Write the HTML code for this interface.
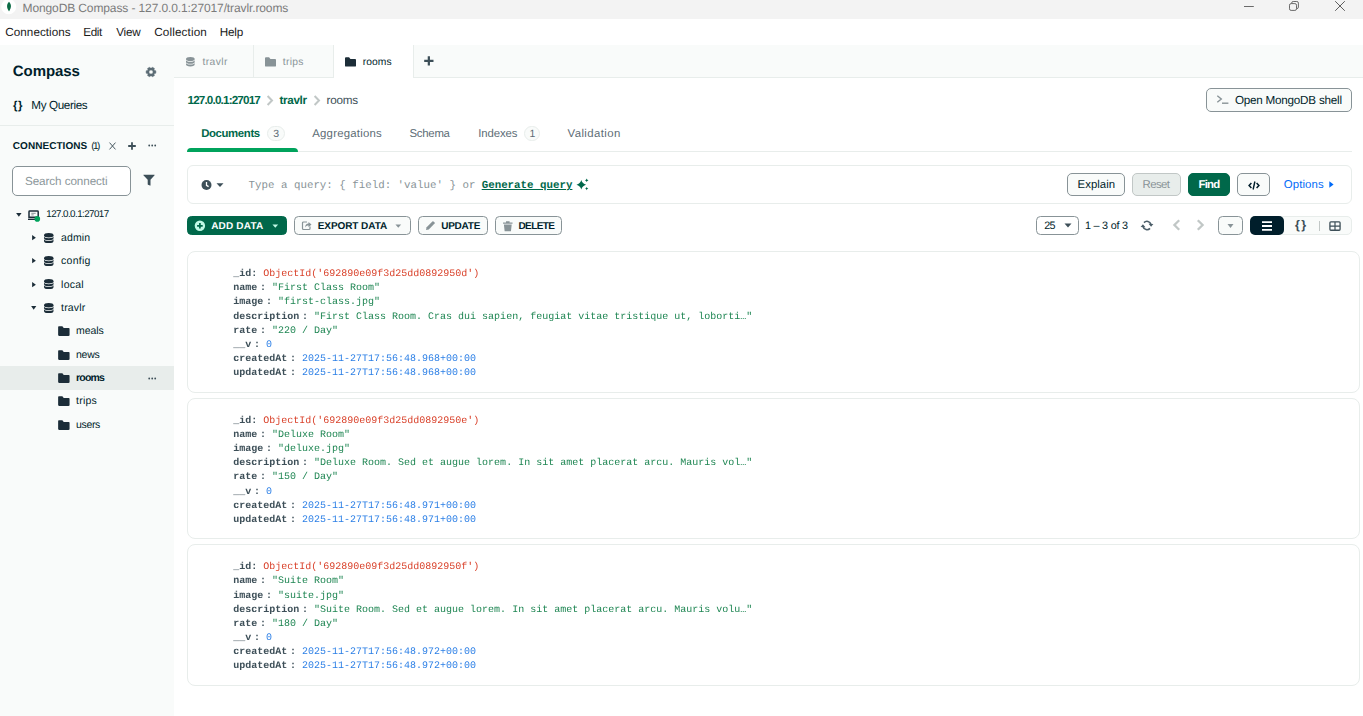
<!DOCTYPE html>
<html>
<head>
<meta charset="utf-8">
<title>MongoDB Compass - 127.0.0.1:27017/travlr.rooms</title>
<style>
*{box-sizing:border-box;margin:0;padding:0}
html,body{width:1363px;height:716px;overflow:hidden;background:#fff;font-family:"Liberation Sans",sans-serif;color:#001e2b}
.a{position:absolute}
.x{position:absolute;white-space:pre;height:16px;text-rendering:geometricPrecision}
svg{position:absolute;overflow:visible}
.bx{position:absolute;border:1px solid #889397;border-radius:4.5px;background:#f9fbfa}
.card{position:absolute;left:187px;width:1173px;height:141px;border:1px solid #e8edeb;border-radius:8px;background:#fff}
.badge{position:absolute;top:126px;height:15px;border:1px solid #e8edeb;border-radius:8px;background:#f9fbfa}
</style>
</head>
<body>
<!-- title bar -->
<div class="a" style="left:0;top:0;width:1363px;height:19px;background:#f3f3f3"></div>
<svg style="left:0;top:0" width="18" height="16" viewBox="0 0 18 16"><circle cx="8.7" cy="6.7" r="7.5" fill="#fff"/><path d="M9 1.8C6.6 4.2 6.3 7.6 8.9 11.2h.2C11.700 7.600 11.400 4.200 9 1.800Z" fill="#0b6b45"/></svg>
<svg style="left:1240px;top:0" width="123" height="19" viewBox="0 0 123 19">
  <path d="M4 6.500H13.800" stroke="#6a6a6a" stroke-width="1" fill="none"/>
  <rect x="49.500" y="3.600" width="7" height="6.800" rx="1.600" fill="none" stroke="#6a6a6a"/><path d="M51.700 3.400V3a1.500 1.500 0 0 1 1.500-1.500h3.600a1.600 1.600 0 0 1 1.600 1.600v4a1.500 1.500 0 0 1-1.500 1.500h-.300" fill="none" stroke="#6a6a6a"/>
  <path d="M95.200 1.200l9.600 9.600M104.800 1.200l-9.600 9.600" stroke="#5e5e5e" stroke-width="1" fill="none"/>
</svg>
<!-- menubar -->
<div class="a" style="left:0;top:19px;width:1363px;height:26px;background:#fff"></div>
<!-- sidebar + tabbar bg -->
<div class="a" style="left:0;top:45px;width:174px;height:671px;background:#f9fbfa"></div>
<div class="a" style="left:174px;top:45px;width:1189px;height:33px;background:#f9fbfa;border-bottom:1px solid #e8edeb"></div>
<!-- workspace tabs -->
<div class="a" style="left:253px;top:45px;width:1px;height:33px;background:#e8edeb"></div>
<div class="a" style="left:333px;top:45px;width:81px;height:33px;background:#fff;border-left:1px solid #e8edeb;border-right:1px solid #e8edeb"></div>
<svg style="left:185.700px;top:57.400px" width="8.700" height="9.500" viewBox="0 0 10 9.700" preserveAspectRatio="none" fill="#889397"><ellipse cx="5" cy="2.100" rx="5" ry="2.100"/><path d="M0 2.800A5 2.100 0 0 0 10 2.800V4.800A5 2.100 0 0 1 0 4.800Z"/><path d="M0 5.500A5 2.100 0 0 0 10 5.500V7.500A5 2.100 0 0 1 0 7.500Z"/></svg>
<svg style="left:265px;top:57px" width="11" height="10" viewBox="0 0 11 10"><path d="M0 1.200C0 .700.400.300.900.300h3.200l1.300 1.600h4.700c.500 0 .900.400.900.900v5.900c0 .500-.400.900-.900.900H.900C.400 9.600 0 9.200 0 8.700Z" fill="#889397"/></svg>
<svg style="left:345px;top:57px" width="11" height="10" viewBox="0 0 11 10"><path d="M0 1.200C0 .700.400.300.900.300h3.200l1.300 1.600h4.700c.500 0 .900.400.900.900v5.900c0 .500-.400.900-.900.900H.900C.400 9.600 0 9.200 0 8.700Z" fill="#1c2d38"/></svg>
<svg style="left:424px;top:56.300px" width="9.700" height="9.700" viewBox="0 0 10 10"><path d="M5 .200v9.600M.200 5h9.600" stroke="#3d4f58" stroke-width="2.300"/></svg>
<!-- sidebar items -->
<svg style="left:144.900px;top:66px" width="12" height="12" viewBox="0 0 12 12"><path fill="#5c6c75" fill-rule="evenodd" stroke="#5c6c75" stroke-width="0.500" stroke-linejoin="round" d="M9.76 4.63L10.85 4.79L10.85 7.21L9.76 7.37L9.06 8.57L9.47 9.60L7.38 10.81L6.69 9.94L5.31 9.94L4.62 10.81L2.53 9.60L2.94 8.57L2.24 7.37L1.15 7.21L1.15 4.79L2.24 4.63L2.94 3.43L2.53 2.40L4.62 1.19L5.31 2.06L6.69 2.06L7.38 1.19L9.47 2.40L9.06 3.43ZM8.10 6.00a2.1 2.1 0 1 0 -4.2 0a2.1 2.1 0 1 0 4.2 0Z"/></svg>
<div class="a" style="left:0;top:125px;width:174px;height:1px;background:#e8edeb"></div>
<svg style="left:109.400px;top:142px" width="7" height="8" viewBox="0 0 8 8" preserveAspectRatio="none"><path d="M.600.600l6.800 6.800M7.400.600l-6.800 6.800" stroke="#3d4f58" stroke-width="1" fill="none"/></svg>
<svg style="left:128px;top:142px" width="8" height="8" viewBox="0 0 8 8"><path d="M4 .200v7.600M.200 4h7.600" stroke="#3d4f58" stroke-width="1.800"/></svg>
<svg style="left:148px;top:144px" width="9" height="3" viewBox="0 0 9 3"><circle cx="1.200" cy="1.500" r=".900" fill="#3d4f58"/><circle cx="4.200" cy="1.500" r=".900" fill="#3d4f58"/><circle cx="7.200" cy="1.500" r=".900" fill="#3d4f58"/></svg>
<div class="a" style="left:12px;top:166px;width:119px;height:30px;border:1px solid #889397;border-radius:5px;background:#fff"></div>
<svg style="left:143px;top:174px" width="12" height="13" viewBox="0 0 12 13"><path d="M.600.800h10.800c.300 0 .400.300.200.500L7.500 5.800v5.400c0 .300-.300.500-.600.400l-1.900-.900c-.200-.1-.300-.300-.300-.500V5.800L.400 1.300C.200 1.100.300.800.600.800Z" fill="#3d4f58"/></svg>
<!-- tree -->
<div class="a" style="left:0;top:366px;width:174px;height:24px;background:#e8edeb"></div>
<svg style="left:15.900px;top:213.100px" width="5.700" height="3.800" viewBox="0 0 5.700 3.800"><path d="M.100.100h5.500L2.850 3.700z" fill="#1c2d38"/></svg>
<svg style="left:28.300px;top:209.700px" width="12" height="12" viewBox="0 0 12 12"><path d="M1.700 1.100h7.800c.400 0 .700.300.700.700v5.400H1V1.800c0-.4.300-.7.700-.7Z" fill="none" stroke="#1c2d38" stroke-width="1.500"/><path d="M3.300 3.300h4.400M3.300 4.900h2.400" stroke="#889397" stroke-width="1"/><path d="M0 8.600h7v1.400H0z" fill="#1c2d38"/><circle cx="9.300" cy="8.900" r="2.800" fill="#00a35c"/></svg>
<svg style="left:148px;top:376.500px" width="9" height="3" viewBox="0 0 9 3"><circle cx="1.200" cy="1.500" r=".900" fill="#3d4f58"/><circle cx="4.200" cy="1.500" r=".900" fill="#3d4f58"/><circle cx="7.200" cy="1.500" r=".900" fill="#3d4f58"/></svg>
<svg style="left:43.9px;top:232.6px" width="9.500" height="10.200" viewBox="0 0 10 9.700" preserveAspectRatio="none" fill="#1c2d38"><ellipse cx="5" cy="2.100" rx="5" ry="2.100"/><path d="M0 2.800A5 2.100 0 0 0 10 2.800V4.800A5 2.100 0 0 1 0 4.800Z"/><path d="M0 5.500A5 2.100 0 0 0 10 5.500V7.500A5 2.100 0 0 1 0 7.500Z"/></svg>
<svg style="left:32.1px;top:235.0px" width="4" height="5.400" viewBox="0 0 4 5.400"><path d="M.100.100L3.900 2.700.100 5.300z" fill="#1c2d38"/></svg>
<svg style="left:43.9px;top:256.0px" width="9.500" height="10.200" viewBox="0 0 10 9.700" preserveAspectRatio="none" fill="#1c2d38"><ellipse cx="5" cy="2.100" rx="5" ry="2.100"/><path d="M0 2.800A5 2.100 0 0 0 10 2.800V4.800A5 2.100 0 0 1 0 4.800Z"/><path d="M0 5.500A5 2.100 0 0 0 10 5.500V7.500A5 2.100 0 0 1 0 7.500Z"/></svg>
<svg style="left:32.1px;top:258.4px" width="4" height="5.400" viewBox="0 0 4 5.400"><path d="M.100.100L3.900 2.700.100 5.300z" fill="#1c2d38"/></svg>
<svg style="left:43.9px;top:279.3px" width="9.500" height="10.200" viewBox="0 0 10 9.700" preserveAspectRatio="none" fill="#1c2d38"><ellipse cx="5" cy="2.100" rx="5" ry="2.100"/><path d="M0 2.800A5 2.100 0 0 0 10 2.800V4.800A5 2.100 0 0 1 0 4.800Z"/><path d="M0 5.500A5 2.100 0 0 0 10 5.500V7.500A5 2.100 0 0 1 0 7.500Z"/></svg>
<svg style="left:32.1px;top:281.7px" width="4" height="5.400" viewBox="0 0 4 5.400"><path d="M.100.100L3.900 2.700.100 5.300z" fill="#1c2d38"/></svg>
<svg style="left:43.9px;top:302.7px" width="9.500" height="10.200" viewBox="0 0 10 9.700" preserveAspectRatio="none" fill="#1c2d38"><ellipse cx="5" cy="2.100" rx="5" ry="2.100"/><path d="M0 2.800A5 2.100 0 0 0 10 2.800V4.800A5 2.100 0 0 1 0 4.800Z"/><path d="M0 5.500A5 2.100 0 0 0 10 5.500V7.500A5 2.100 0 0 1 0 7.500Z"/></svg>
<svg style="left:30.900px;top:306.2px" width="5.400" height="3.800" viewBox="0 0 5.400 3.800"><path d="M.100.100h5.200L2.700 3.700z" fill="#1c2d38"/></svg>
<svg style="left:57.8px;top:326.3px" width="11.700" height="10.400" viewBox="0 0 11 10"><path d="M0 1.200C0 .700.400.300.900.300h3.200l1.300 1.600h4.700c.500 0 .900.400.900.900v5.900c0 .500-.400.900-.900.900H.900C.400 9.600 0 9.200 0 8.700Z" fill="#1c2d38"/></svg>
<svg style="left:57.8px;top:349.5px" width="11.700" height="10.400" viewBox="0 0 11 10"><path d="M0 1.200C0 .700.400.300.900.300h3.200l1.300 1.600h4.700c.500 0 .900.400.900.900v5.900c0 .500-.400.900-.900.900H.900C.400 9.600 0 9.200 0 8.700Z" fill="#1c2d38"/></svg>
<svg style="left:57.8px;top:372.9px" width="11.700" height="10.400" viewBox="0 0 11 10"><path d="M0 1.200C0 .700.400.300.900.300h3.200l1.300 1.600h4.700c.500 0 .900.400.900.900v5.900c0 .500-.400.900-.900.900H.900C.400 9.600 0 9.200 0 8.700Z" fill="#1c2d38"/></svg>
<svg style="left:57.8px;top:396.3px" width="11.700" height="10.400" viewBox="0 0 11 10"><path d="M0 1.200C0 .700.400.300.900.300h3.200l1.300 1.600h4.700c.500 0 .900.400.900.900v5.900c0 .500-.400.900-.900.900H.900C.400 9.600 0 9.200 0 8.700Z" fill="#1c2d38"/></svg>
<svg style="left:57.8px;top:419.6px" width="11.700" height="10.400" viewBox="0 0 11 10"><path d="M0 1.200C0 .700.400.300.900.300h3.200l1.300 1.600h4.700c.500 0 .900.400.900.900v5.900c0 .500-.400.900-.900.900H.900C.400 9.600 0 9.200 0 8.700Z" fill="#1c2d38"/></svg>
<!-- breadcrumb chevrons -->
<svg style="left:266px;top:95px" width="8" height="11" viewBox="0 0 8 11"><path d="M1.600 1L6 5.500 1.600 10" fill="none" stroke="#c1c7c6" stroke-width="2"/></svg>
<svg style="left:313px;top:95px" width="8" height="11" viewBox="0 0 8 11"><path d="M1.600 1L6 5.500 1.600 10" fill="none" stroke="#c1c7c6" stroke-width="2"/></svg>
<!-- shell btn -->
<div class="bx" style="left:1206px;top:88px;width:146px;height:24px;border-radius:5px"></div>
<svg style="left:1216px;top:94px" width="13" height="12" viewBox="0 0 13 12"><path d="M1.300 1.800L5.300 5 1.300 8.200" fill="none" stroke="#889397" stroke-width="1.400"/><path d="M6 9.200H12.400" stroke="#889397" stroke-width="1.400"/></svg>
<!-- subtabs -->
<div class="a" style="left:187px;top:151px;width:1165px;height:1px;background:#e8edeb"></div>
<div class="a" style="left:187px;top:148px;width:111px;height:4px;background:#00a35c;border-radius:4px 4px 0 0"></div>
<div class="badge" style="left:267px;width:18px"></div>
<div class="badge" style="left:524px;width:16px"></div>
<!-- query bar -->
<div class="a" style="left:187px;top:165px;width:1165px;height:39px;border:1px solid #e8edeb;border-radius:6px;background:#fff"></div>
<svg style="left:201px;top:179px" width="24" height="12" viewBox="0 0 24 12"><circle cx="5.500" cy="6" r="5" fill="#3d4f58"/><path d="M5.500 3V6.300L7.600 7.600" fill="none" stroke="#fff" stroke-width="1.300"/><path d="M15.500 4.300h7l-3.500 3.700z" fill="#3d4f58"/></svg>
<svg style="left:575px;top:178px" width="14" height="14" viewBox="0 0 14 14"><path d="M6.30 2.00Q7.36 5.74 11.10 6.80Q7.36 7.86 6.30 11.60Q5.24 7.86 1.50 6.80Q5.24 5.74 6.30 2.00ZM11.70 0.40Q12.06 1.84 13.50 2.20Q12.06 2.56 11.70 4.00Q11.34 2.56 9.90 2.20Q11.34 1.84 11.70 0.40ZM11.70 8.90Q12.04 10.26 13.40 10.60Q12.04 10.94 11.70 12.30Q11.36 10.94 10.00 10.60Q11.36 10.26 11.70 8.90Z" fill="#00684a"/></svg>
<div class="bx" style="left:1067px;top:173px;width:58px;height:23px;border-radius:5px"></div>
<div class="bx" style="left:1132px;top:173px;width:49px;height:23px;border-radius:5px;background:#e8edeb;border-color:#c1c7c6"></div>
<div class="bx" style="left:1188px;top:173px;width:42px;height:23px;border-radius:5px;background:#00684a;border-color:#00684a"></div>
<div class="bx" style="left:1237px;top:173px;width:33px;height:23px;border-radius:5px"></div>
<svg style="left:1247.600px;top:180.500px" width="12" height="9" viewBox="0 0 12 9"><path d="M3.400 2.100L1.100 4.500 3.400 6.900M8.600 2.100L10.900 4.500 8.600 6.900" fill="none" stroke="#001e2b" stroke-width="1.500"/><path d="M6.900.500L5.100 8.500" stroke="#001e2b" stroke-width="1.400"/></svg>
<svg style="left:1328.800px;top:181px" width="5" height="7" viewBox="0 0 5 7"><path d="M.300.300L4.600 3.500.300 6.700z" fill="#016bf8"/></svg>
<!-- toolbar -->
<div class="bx" style="left:187px;top:216px;width:100px;height:19px;background:#00684a;border-color:#00684a"></div>
<svg style="left:194px;top:220px" width="11" height="11" viewBox="0 0 11 11"><circle cx="5.900" cy="5.800" r="5.200" fill="#c0fae6"/><path d="M5.900 3v5.600M3.100 5.800h5.600" stroke="#00684a" stroke-width="1.700"/></svg>
<svg style="left:271.800px;top:223.500px" width="6.600" height="4.100" viewBox="0 0 8 5"><path d="M.500.500h7L4 4.500z" fill="#c0fae6"/></svg>
<div class="bx" style="left:294px;top:216px;width:117px;height:19px"></div>
<svg style="left:301px;top:220px" width="11" height="11" viewBox="0 0 11 11"><path d="M6 2H2.500a1 1 0 0 0-1 1v5.500a1 1 0 0 0 1 1H8a1 1 0 0 0 1-1V6.500" fill="none" stroke="#889397" stroke-width="1.200"/><path d="M4 7.500C4.300 5 5.500 3.800 7.500 3.600V2L10.500 4.600 7.500 7.200V5.500C6 5.500 5 6 4 7.500Z" fill="#889397"/></svg>
<svg style="left:394.700px;top:223.500px" width="6.600" height="4.100" viewBox="0 0 8 5"><path d="M.500.500h7L4 4.500z" fill="#889397"/></svg>
<div class="bx" style="left:418px;top:216px;width:70px;height:19px"></div>
<svg style="left:425px;top:220px" width="11" height="11" viewBox="0 0 11 11"><path d="M1 10l.600-2.800L7.400 1.400a.800.800 0 0 1 1.100 0l1.100 1.100a.800.800 0 0 1 0 1.100L3.800 9.400z" fill="#889397"/></svg>
<div class="bx" style="left:495px;top:216px;width:67px;height:19px"></div>
<svg style="left:501.600px;top:219.600px" width="11.600" height="12.200" viewBox="0 0 11 11"><path d="M1 2h9v1.300H1zM3.800.800h3.400V2H3.800zM1.800 4h7.400l-.700 6.300H2.500z" fill="#889397"/></svg>
<!-- right tools -->
<div class="bx" style="left:1036px;top:216px;width:43px;height:19px;background:#fff"></div>
<svg style="left:1064px;top:223px" width="8" height="5" viewBox="0 0 8 5"><path d="M.500.500h7L4 4.500z" fill="#3d4f58"/></svg>
<svg style="left:1139.700px;top:220px" width="14" height="11" viewBox="-7 -5.500 14 11"><path d="M-3-2.900A4.100 4.100 0 0 1 3.900-1.200M3 2.900A4.100 4.100 0 0 1-3.900 1.200" fill="none" stroke="#4b5d68" stroke-width="1.600"/><path d="M1.500-1.700L6.400-1.500 4.100 1.200ZM-1.500 1.700L-6.400 1.500-4.100-1.200Z" fill="#4b5d68"/></svg>
<svg style="left:1172px;top:219.200px" width="9" height="12" viewBox="0 0 9 12"><path d="M7.200 1.200L2.400 6l4.800 4.800" fill="none" stroke="#c1c7c6" stroke-width="2.300"/></svg>
<svg style="left:1196px;top:219.200px" width="9" height="12" viewBox="0 0 9 12"><path d="M1.800 1.200L6.600 6l-4.800 4.800" fill="none" stroke="#c1c7c6" stroke-width="2.300"/></svg>
<div class="bx" style="left:1218px;top:216px;width:25px;height:19px"></div>
<svg style="left:1227px;top:224px" width="7" height="4" viewBox="0 0 7 4"><path d="M.500 0h6L3.500 4z" fill="#889397"/></svg>
<div class="a" style="left:1250px;top:216px;width:102px;height:19px;border:1px solid #e8edeb;border-radius:5px;background:#f9fbfa"></div>
<div class="a" style="left:1250px;top:216px;width:34px;height:19px;border-radius:5px;background:#001e2b"></div>
<svg style="left:1261px;top:221px" width="12" height="10" viewBox="0 0 12 10"><path d="M1 1.200h10M1 5h10M1 8.800h10" stroke="#fff" stroke-width="1.800"/></svg>
<div class="a" style="left:1319px;top:221px;width:1px;height:10px;background:#c1c7c6"></div>
<svg style="left:1329.300px;top:220.500px" width="12" height="10.200" viewBox="0 0 13 11"><rect x="1" y="1" width="11" height="9" rx="1" fill="none" stroke="#3d4f58" stroke-width="1.400"/><path d="M6.500 1v9M1 5.500h11" stroke="#3d4f58" stroke-width="1.300"/></svg>
<!-- cards -->
<div class="card" style="top:251px;height:142px"></div>
<div class="card" style="top:398px;height:141px"></div>
<div class="card" style="top:544px;height:142px"></div>
<div class="x" style="left:22.50px;top:0px;font:normal 12px/16px 'Liberation Sans', sans-serif;letter-spacing:-0.111px;color:#7b7b7b;">MongoDB Compass - 127.0.0.1:27017/travlr.rooms</div>
<div class="x" style="left:5.30px;top:25px;font:normal 11.7px/16px 'Liberation Sans', sans-serif;letter-spacing:0.037px;color:#1a1a1a;">Connections</div>
<div class="x" style="left:83.30px;top:25px;font:normal 11.7px/16px 'Liberation Sans', sans-serif;letter-spacing:-0.397px;color:#1a1a1a;">Edit</div>
<div class="x" style="left:116.20px;top:25px;font:normal 11.7px/16px 'Liberation Sans', sans-serif;letter-spacing:-0.194px;color:#1a1a1a;">View</div>
<div class="x" style="left:154.20px;top:25px;font:normal 11.7px/16px 'Liberation Sans', sans-serif;letter-spacing:0.142px;color:#1a1a1a;">Collection</div>
<div class="x" style="left:219.70px;top:25px;font:normal 11.7px/16px 'Liberation Sans', sans-serif;letter-spacing:-0.179px;color:#1a1a1a;">Help</div>
<div class="x" style="left:12.80px;top:64px;font:bold 15px/16px 'Liberation Sans', sans-serif;letter-spacing:-0.063px;color:#001e2b;">Compass</div>
<div class="x" style="left:13.00px;top:98px;font:bold 11.5px/16px 'Liberation Sans', sans-serif;letter-spacing:0.425px;color:#001e2b;">{}</div>
<div class="x" style="left:31.30px;top:98px;font:normal 11.7px/16px 'Liberation Sans', sans-serif;letter-spacing:-0.378px;color:#001e2b;">My Queries</div>
<div class="x" style="left:12.80px;top:139px;font:bold 10px/16px 'Liberation Sans', sans-serif;letter-spacing:0.048px;color:#001e2b;">CONNECTIONS</div>
<div class="x" style="left:91.30px;top:139px;font:normal 10px/16px 'Liberation Sans', sans-serif;letter-spacing:-1.596px;color:#001e2b;">(1)</div>
<div class="x" style="left:25.00px;top:174px;font:normal 11.7px/16px 'Liberation Sans', sans-serif;letter-spacing:-0.087px;color:#8c979b;">Search connecti</div>
<div class="x" style="left:46.30px;top:207px;font:normal 9.8px/16px 'Liberation Sans', sans-serif;letter-spacing:-0.570px;color:#001e2b;">127.0.0.1:27017</div>
<div class="x" style="left:61.10px;top:230px;font:normal 10.5px/16px 'Liberation Sans', sans-serif;letter-spacing:0.110px;color:#001e2b;">admin</div>
<div class="x" style="left:61.10px;top:253px;font:normal 10.5px/16px 'Liberation Sans', sans-serif;letter-spacing:0.244px;color:#001e2b;">config</div>
<div class="x" style="left:61.10px;top:277px;font:normal 10.5px/16px 'Liberation Sans', sans-serif;letter-spacing:0.235px;color:#001e2b;">local</div>
<div class="x" style="left:61.10px;top:300px;font:normal 10.5px/16px 'Liberation Sans', sans-serif;letter-spacing:0.173px;color:#001e2b;">travlr</div>
<div class="x" style="left:76.10px;top:323px;font:normal 10.5px/16px 'Liberation Sans', sans-serif;letter-spacing:-0.065px;color:#001e2b;">meals</div>
<div class="x" style="left:76.10px;top:347px;font:normal 10.5px/16px 'Liberation Sans', sans-serif;letter-spacing:-0.321px;color:#001e2b;">news</div>
<div class="x" style="left:76.10px;top:370px;font:bold 10.5px/16px 'Liberation Sans', sans-serif;letter-spacing:-0.837px;color:#001e2b;">rooms</div>
<div class="x" style="left:76.10px;top:393px;font:normal 10.5px/16px 'Liberation Sans', sans-serif;letter-spacing:0.228px;color:#001e2b;">trips</div>
<div class="x" style="left:76.10px;top:417px;font:normal 10.5px/16px 'Liberation Sans', sans-serif;letter-spacing:-0.381px;color:#001e2b;">users</div>
<div class="x" style="left:202.50px;top:55px;font:normal 10.3px/16px 'Liberation Sans', sans-serif;letter-spacing:0.410px;color:#8a9599;">travlr</div>
<div class="x" style="left:282.80px;top:55px;font:normal 10.3px/16px 'Liberation Sans', sans-serif;letter-spacing:0.274px;color:#8a9599;">trips</div>
<div class="x" style="left:362.80px;top:55px;font:normal 10.3px/16px 'Liberation Sans', sans-serif;letter-spacing:0.060px;color:#001e2b;">rooms</div>
<div class="x" style="left:187.50px;top:93px;font:bold 11.7px/16px 'Liberation Sans', sans-serif;letter-spacing:-0.845px;color:#00684a;">127.0.0.1:27017</div>
<div class="x" style="left:279.50px;top:93px;font:bold 11.7px/16px 'Liberation Sans', sans-serif;letter-spacing:-0.338px;color:#00684a;">travlr</div>
<div class="x" style="left:326.50px;top:93px;font:normal 11.7px/16px 'Liberation Sans', sans-serif;letter-spacing:-0.232px;color:#3d4f58;">rooms</div>
<div class="x" style="left:1234.90px;top:93px;font:normal 11.7px/16px 'Liberation Sans', sans-serif;letter-spacing:-0.235px;color:#001e2b;">Open MongoDB shell</div>
<div class="x" style="left:201.20px;top:126px;font:bold 11.4px/16px 'Liberation Sans', sans-serif;letter-spacing:-0.386px;color:#00684a;">Documents</div>
<div class="x" style="left:273.20px;top:126px;font:normal 10.5px/16px 'Liberation Sans', sans-serif;letter-spacing:0.000px;color:#5c6c75;">3</div>
<div class="x" style="left:312.20px;top:126px;font:normal 11.4px/16px 'Liberation Sans', sans-serif;letter-spacing:0.225px;color:#5c6c75;">Aggregations</div>
<div class="x" style="left:409.50px;top:126px;font:normal 11.4px/16px 'Liberation Sans', sans-serif;letter-spacing:-0.270px;color:#5c6c75;">Schema</div>
<div class="x" style="left:478.20px;top:126px;font:normal 11.4px/16px 'Liberation Sans', sans-serif;letter-spacing:-0.117px;color:#5c6c75;">Indexes</div>
<div class="x" style="left:529.60px;top:126px;font:normal 10.5px/16px 'Liberation Sans', sans-serif;letter-spacing:0.000px;color:#5c6c75;">1</div>
<div class="x" style="left:567.50px;top:126px;font:normal 11.4px/16px 'Liberation Sans', sans-serif;letter-spacing:0.406px;color:#5c6c75;">Validation</div>
<div class="x" style="left:248.60px;top:178px;font:normal 10.8px/16px 'Liberation Mono', monospace;letter-spacing:0.000px;color:#889397;">Type a query: { field: 'value' } or </div>
<div class="x" style="left:481.70px;top:178px;font:bold 10.8px/16px 'Liberation Mono', monospace;letter-spacing:0.000px;color:#00684a;text-decoration:underline;">Generate query</div>
<div class="x" style="left:1077.50px;top:177px;font:normal 11.4px/16px 'Liberation Sans', sans-serif;letter-spacing:0.046px;color:#001e2b;">Explain</div>
<div class="x" style="left:1142.50px;top:177px;font:normal 11.4px/16px 'Liberation Sans', sans-serif;letter-spacing:-0.573px;color:#889397;">Reset</div>
<div class="x" style="left:1198.50px;top:177px;font:bold 11.4px/16px 'Liberation Sans', sans-serif;letter-spacing:-0.760px;color:#ffffff;">Find</div>
<div class="x" style="left:1283.70px;top:177px;font:normal 11.4px/16px 'Liberation Sans', sans-serif;letter-spacing:0.123px;color:#016bf8;">Options</div>
<div class="x" style="left:211.20px;top:219px;font:bold 10px/16px 'Liberation Sans', sans-serif;letter-spacing:0.184px;color:#ffffff;">ADD DATA</div>
<div class="x" style="left:317.70px;top:219px;font:bold 10px/16px 'Liberation Sans', sans-serif;letter-spacing:-0.066px;color:#001e2b;">EXPORT DATA</div>
<div class="x" style="left:441.20px;top:219px;font:bold 10px/16px 'Liberation Sans', sans-serif;letter-spacing:-0.240px;color:#001e2b;">UPDATE</div>
<div class="x" style="left:518.50px;top:219px;font:bold 10px/16px 'Liberation Sans', sans-serif;letter-spacing:-0.616px;color:#001e2b;">DELETE</div>
<div class="x" style="left:1044.20px;top:218px;font:normal 10.8px/16px 'Liberation Sans', sans-serif;letter-spacing:-0.705px;color:#001e2b;">25</div>
<div class="x" style="left:1085.00px;top:218px;font:normal 10.8px/16px 'Liberation Sans', sans-serif;letter-spacing:-0.224px;color:#001e2b;">1 – 3 of 3</div>
<div class="x" style="left:1295.00px;top:217px;font:bold 12.5px/16px 'Liberation Sans', sans-serif;letter-spacing:1.435px;color:#3d4f58;">{}</div>
<div style="position:absolute;left:0;top:0;width:1363px;height:716px;will-change:transform">
<div class="x" style="left:233.30px;top:267px;font:bold 10px/16px 'Liberation Mono', monospace;letter-spacing:0.000px;color:#3d4f58;">_id: </div>
<div class="x" style="left:263.30px;top:267px;font:normal 10px/16px 'Liberation Mono', monospace;letter-spacing:0.000px;color:#d9412a;">ObjectId('692890e09f3d25dd0892950d')</div>
<div class="x" style="left:233.30px;top:281px;font:bold 10px/16px 'Liberation Mono', monospace;letter-spacing:0.000px;color:#3d4f58;">name</div>
<div class="x" style="left:260.10px;top:281px;font:bold 10px/16px 'Liberation Mono', monospace;letter-spacing:0.000px;color:#3d4f58;">:</div>
<div class="x" style="left:272.10px;top:281px;font:normal 10px/16px 'Liberation Mono', monospace;letter-spacing:0.000px;color:#1f8653;">"First Class Room"</div>
<div class="x" style="left:233.30px;top:295px;font:bold 10px/16px 'Liberation Mono', monospace;letter-spacing:0.000px;color:#3d4f58;">image</div>
<div class="x" style="left:266.10px;top:295px;font:bold 10px/16px 'Liberation Mono', monospace;letter-spacing:0.000px;color:#3d4f58;">:</div>
<div class="x" style="left:278.10px;top:295px;font:normal 10px/16px 'Liberation Mono', monospace;letter-spacing:0.000px;color:#1f8653;">"first-class.jpg"</div>
<div class="x" style="left:233.30px;top:310px;font:bold 10px/16px 'Liberation Mono', monospace;letter-spacing:0.000px;color:#3d4f58;">description</div>
<div class="x" style="left:302.10px;top:310px;font:bold 10px/16px 'Liberation Mono', monospace;letter-spacing:0.000px;color:#3d4f58;">:</div>
<div class="x" style="left:314.10px;top:310px;font:normal 10px/16px 'Liberation Mono', monospace;letter-spacing:0.000px;color:#1f8653;">"First Class Room. Cras dui sapien, feugiat vitae tristique ut, loborti…"</div>
<div class="x" style="left:233.30px;top:324px;font:bold 10px/16px 'Liberation Mono', monospace;letter-spacing:0.000px;color:#3d4f58;">rate</div>
<div class="x" style="left:260.10px;top:324px;font:bold 10px/16px 'Liberation Mono', monospace;letter-spacing:0.000px;color:#3d4f58;">:</div>
<div class="x" style="left:272.10px;top:324px;font:normal 10px/16px 'Liberation Mono', monospace;letter-spacing:0.000px;color:#1f8653;">"220 / Day"</div>
<div class="x" style="left:233.30px;top:338px;font:bold 10px/16px 'Liberation Mono', monospace;letter-spacing:0.000px;color:#3d4f58;">__v</div>
<div class="x" style="left:254.10px;top:338px;font:bold 10px/16px 'Liberation Mono', monospace;letter-spacing:0.000px;color:#3d4f58;">:</div>
<div class="x" style="left:266.10px;top:338px;font:normal 10px/16px 'Liberation Mono', monospace;letter-spacing:0.000px;color:#2b7fe6;">0</div>
<div class="x" style="left:233.30px;top:352px;font:bold 10px/16px 'Liberation Mono', monospace;letter-spacing:0.000px;color:#3d4f58;">createdAt</div>
<div class="x" style="left:290.10px;top:352px;font:bold 10px/16px 'Liberation Mono', monospace;letter-spacing:0.000px;color:#3d4f58;">:</div>
<div class="x" style="left:302.10px;top:352px;font:normal 10px/16px 'Liberation Mono', monospace;letter-spacing:0.000px;color:#2b7fe6;">2025-11-27T17:56:48.968+00:00</div>
<div class="x" style="left:233.30px;top:366px;font:bold 10px/16px 'Liberation Mono', monospace;letter-spacing:0.000px;color:#3d4f58;">updatedAt</div>
<div class="x" style="left:290.10px;top:366px;font:bold 10px/16px 'Liberation Mono', monospace;letter-spacing:0.000px;color:#3d4f58;">:</div>
<div class="x" style="left:302.10px;top:366px;font:normal 10px/16px 'Liberation Mono', monospace;letter-spacing:0.000px;color:#2b7fe6;">2025-11-27T17:56:48.968+00:00</div>
<div class="x" style="left:233.30px;top:414px;font:bold 10px/16px 'Liberation Mono', monospace;letter-spacing:0.000px;color:#3d4f58;">_id: </div>
<div class="x" style="left:263.30px;top:414px;font:normal 10px/16px 'Liberation Mono', monospace;letter-spacing:0.000px;color:#d9412a;">ObjectId('692890e09f3d25dd0892950e')</div>
<div class="x" style="left:233.30px;top:428px;font:bold 10px/16px 'Liberation Mono', monospace;letter-spacing:0.000px;color:#3d4f58;">name</div>
<div class="x" style="left:260.10px;top:428px;font:bold 10px/16px 'Liberation Mono', monospace;letter-spacing:0.000px;color:#3d4f58;">:</div>
<div class="x" style="left:272.10px;top:428px;font:normal 10px/16px 'Liberation Mono', monospace;letter-spacing:0.000px;color:#1f8653;">"Deluxe Room"</div>
<div class="x" style="left:233.30px;top:442px;font:bold 10px/16px 'Liberation Mono', monospace;letter-spacing:0.000px;color:#3d4f58;">image</div>
<div class="x" style="left:266.10px;top:442px;font:bold 10px/16px 'Liberation Mono', monospace;letter-spacing:0.000px;color:#3d4f58;">:</div>
<div class="x" style="left:278.10px;top:442px;font:normal 10px/16px 'Liberation Mono', monospace;letter-spacing:0.000px;color:#1f8653;">"deluxe.jpg"</div>
<div class="x" style="left:233.30px;top:456px;font:bold 10px/16px 'Liberation Mono', monospace;letter-spacing:0.000px;color:#3d4f58;">description</div>
<div class="x" style="left:302.10px;top:456px;font:bold 10px/16px 'Liberation Mono', monospace;letter-spacing:0.000px;color:#3d4f58;">:</div>
<div class="x" style="left:314.10px;top:456px;font:normal 10px/16px 'Liberation Mono', monospace;letter-spacing:0.000px;color:#1f8653;">"Deluxe Room. Sed et augue lorem. In sit amet placerat arcu. Mauris vol…"</div>
<div class="x" style="left:233.30px;top:470px;font:bold 10px/16px 'Liberation Mono', monospace;letter-spacing:0.000px;color:#3d4f58;">rate</div>
<div class="x" style="left:260.10px;top:470px;font:bold 10px/16px 'Liberation Mono', monospace;letter-spacing:0.000px;color:#3d4f58;">:</div>
<div class="x" style="left:272.10px;top:470px;font:normal 10px/16px 'Liberation Mono', monospace;letter-spacing:0.000px;color:#1f8653;">"150 / Day"</div>
<div class="x" style="left:233.30px;top:485px;font:bold 10px/16px 'Liberation Mono', monospace;letter-spacing:0.000px;color:#3d4f58;">__v</div>
<div class="x" style="left:254.10px;top:485px;font:bold 10px/16px 'Liberation Mono', monospace;letter-spacing:0.000px;color:#3d4f58;">:</div>
<div class="x" style="left:266.10px;top:485px;font:normal 10px/16px 'Liberation Mono', monospace;letter-spacing:0.000px;color:#2b7fe6;">0</div>
<div class="x" style="left:233.30px;top:499px;font:bold 10px/16px 'Liberation Mono', monospace;letter-spacing:0.000px;color:#3d4f58;">createdAt</div>
<div class="x" style="left:290.10px;top:499px;font:bold 10px/16px 'Liberation Mono', monospace;letter-spacing:0.000px;color:#3d4f58;">:</div>
<div class="x" style="left:302.10px;top:499px;font:normal 10px/16px 'Liberation Mono', monospace;letter-spacing:0.000px;color:#2b7fe6;">2025-11-27T17:56:48.971+00:00</div>
<div class="x" style="left:233.30px;top:513px;font:bold 10px/16px 'Liberation Mono', monospace;letter-spacing:0.000px;color:#3d4f58;">updatedAt</div>
<div class="x" style="left:290.10px;top:513px;font:bold 10px/16px 'Liberation Mono', monospace;letter-spacing:0.000px;color:#3d4f58;">:</div>
<div class="x" style="left:302.10px;top:513px;font:normal 10px/16px 'Liberation Mono', monospace;letter-spacing:0.000px;color:#2b7fe6;">2025-11-27T17:56:48.971+00:00</div>
<div class="x" style="left:233.30px;top:560px;font:bold 10px/16px 'Liberation Mono', monospace;letter-spacing:0.000px;color:#3d4f58;">_id: </div>
<div class="x" style="left:263.30px;top:560px;font:normal 10px/16px 'Liberation Mono', monospace;letter-spacing:0.000px;color:#d9412a;">ObjectId('692890e09f3d25dd0892950f')</div>
<div class="x" style="left:233.30px;top:574px;font:bold 10px/16px 'Liberation Mono', monospace;letter-spacing:0.000px;color:#3d4f58;">name</div>
<div class="x" style="left:260.10px;top:574px;font:bold 10px/16px 'Liberation Mono', monospace;letter-spacing:0.000px;color:#3d4f58;">:</div>
<div class="x" style="left:272.10px;top:574px;font:normal 10px/16px 'Liberation Mono', monospace;letter-spacing:0.000px;color:#1f8653;">"Suite Room"</div>
<div class="x" style="left:233.30px;top:589px;font:bold 10px/16px 'Liberation Mono', monospace;letter-spacing:0.000px;color:#3d4f58;">image</div>
<div class="x" style="left:266.10px;top:589px;font:bold 10px/16px 'Liberation Mono', monospace;letter-spacing:0.000px;color:#3d4f58;">:</div>
<div class="x" style="left:278.10px;top:589px;font:normal 10px/16px 'Liberation Mono', monospace;letter-spacing:0.000px;color:#1f8653;">"suite.jpg"</div>
<div class="x" style="left:233.30px;top:603px;font:bold 10px/16px 'Liberation Mono', monospace;letter-spacing:0.000px;color:#3d4f58;">description</div>
<div class="x" style="left:302.10px;top:603px;font:bold 10px/16px 'Liberation Mono', monospace;letter-spacing:0.000px;color:#3d4f58;">:</div>
<div class="x" style="left:314.10px;top:603px;font:normal 10px/16px 'Liberation Mono', monospace;letter-spacing:0.000px;color:#1f8653;">"Suite Room. Sed et augue lorem. In sit amet placerat arcu. Mauris volu…"</div>
<div class="x" style="left:233.30px;top:617px;font:bold 10px/16px 'Liberation Mono', monospace;letter-spacing:0.000px;color:#3d4f58;">rate</div>
<div class="x" style="left:260.10px;top:617px;font:bold 10px/16px 'Liberation Mono', monospace;letter-spacing:0.000px;color:#3d4f58;">:</div>
<div class="x" style="left:272.10px;top:617px;font:normal 10px/16px 'Liberation Mono', monospace;letter-spacing:0.000px;color:#1f8653;">"180 / Day"</div>
<div class="x" style="left:233.30px;top:631px;font:bold 10px/16px 'Liberation Mono', monospace;letter-spacing:0.000px;color:#3d4f58;">__v</div>
<div class="x" style="left:254.10px;top:631px;font:bold 10px/16px 'Liberation Mono', monospace;letter-spacing:0.000px;color:#3d4f58;">:</div>
<div class="x" style="left:266.10px;top:631px;font:normal 10px/16px 'Liberation Mono', monospace;letter-spacing:0.000px;color:#2b7fe6;">0</div>
<div class="x" style="left:233.30px;top:645px;font:bold 10px/16px 'Liberation Mono', monospace;letter-spacing:0.000px;color:#3d4f58;">createdAt</div>
<div class="x" style="left:290.10px;top:645px;font:bold 10px/16px 'Liberation Mono', monospace;letter-spacing:0.000px;color:#3d4f58;">:</div>
<div class="x" style="left:302.10px;top:645px;font:normal 10px/16px 'Liberation Mono', monospace;letter-spacing:0.000px;color:#2b7fe6;">2025-11-27T17:56:48.972+00:00</div>
<div class="x" style="left:233.30px;top:659px;font:bold 10px/16px 'Liberation Mono', monospace;letter-spacing:0.000px;color:#3d4f58;">updatedAt</div>
<div class="x" style="left:290.10px;top:659px;font:bold 10px/16px 'Liberation Mono', monospace;letter-spacing:0.000px;color:#3d4f58;">:</div>
<div class="x" style="left:302.10px;top:659px;font:normal 10px/16px 'Liberation Mono', monospace;letter-spacing:0.000px;color:#2b7fe6;">2025-11-27T17:56:48.972+00:00</div>
</div>
</body>
</html>
